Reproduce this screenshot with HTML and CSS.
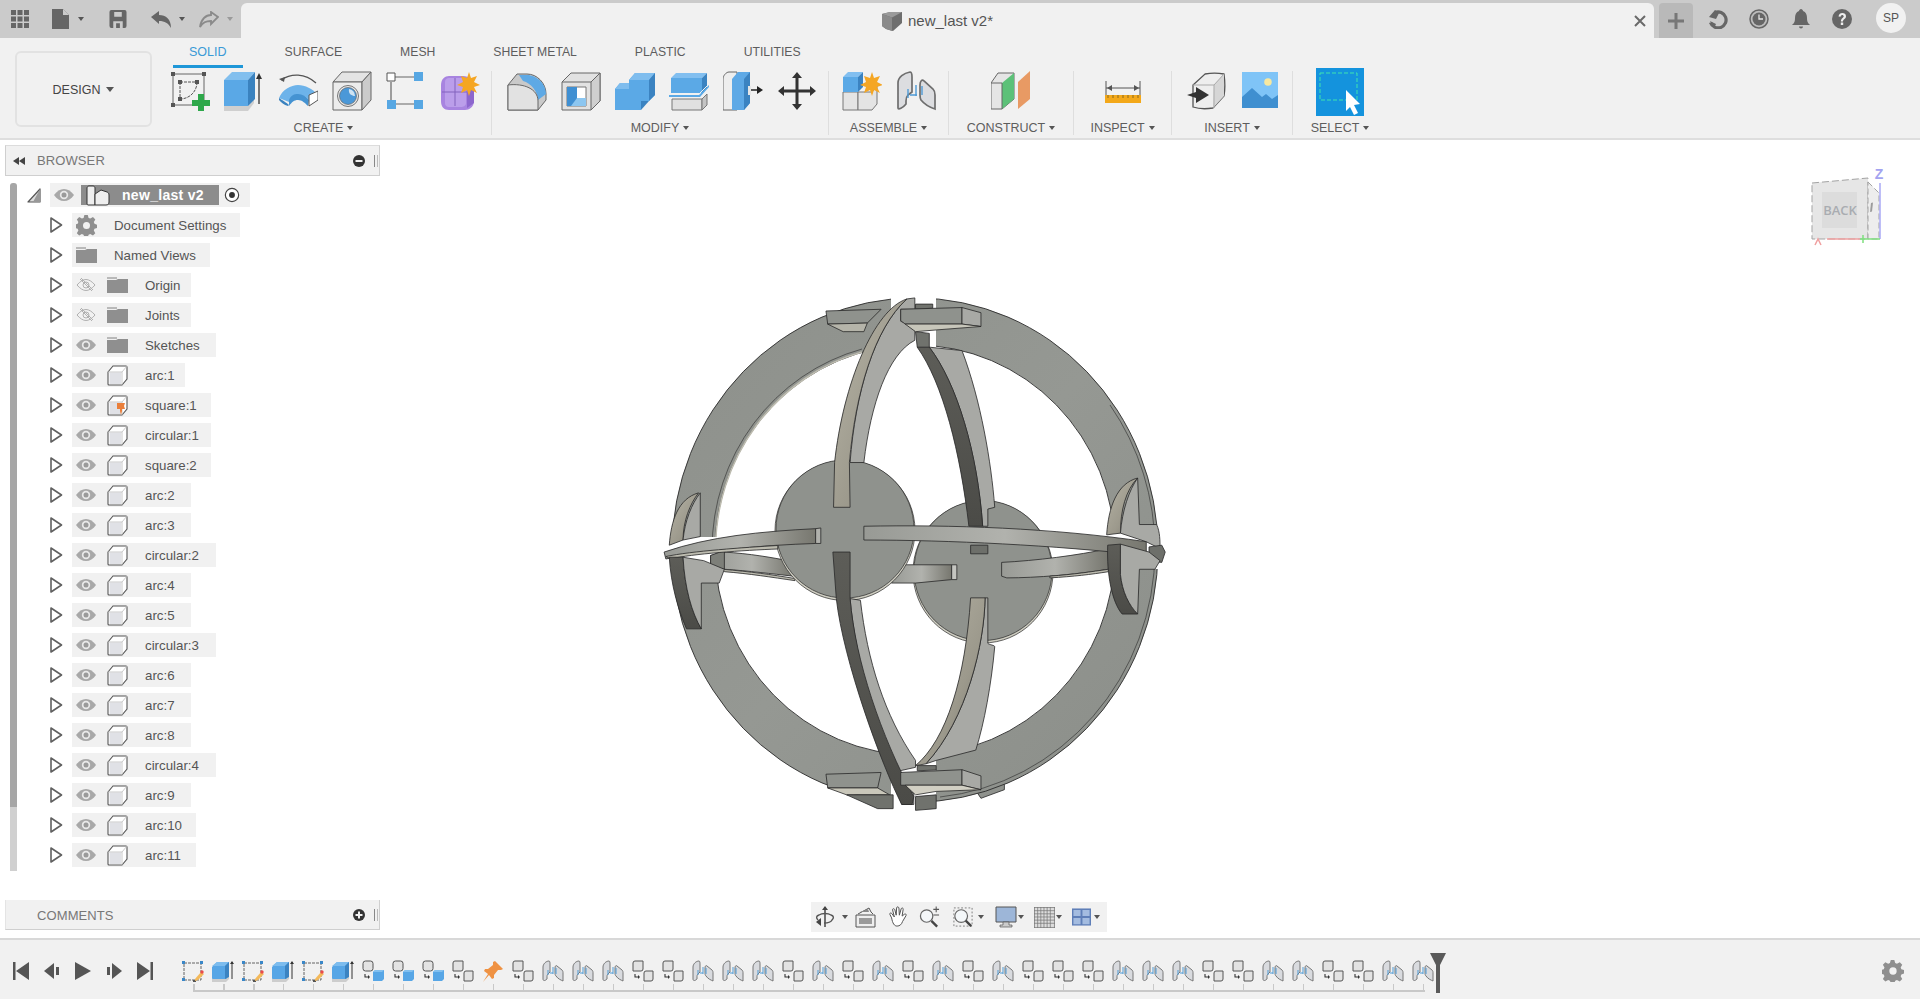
FILE: index.html
```html
<!DOCTYPE html>
<html lang="en">
<head>
<meta charset="utf-8">
<title>new_last v2</title>
<link rel="stylesheet" href="styles.css">
</head>
<body>
<svg class="defs" width="0" height="0">
  <defs>
    <linearGradient id="gt" x1="0" y1="0" x2="1" y2="1"><stop offset="0" stop-color="#b7b4a6"/><stop offset=".6" stop-color="#9c998c"/><stop offset="1" stop-color="#75746b"/></linearGradient>
    <linearGradient id="gd" x1="0" y1="0" x2="0" y2="1"><stop offset="0" stop-color="#5d5d58"/><stop offset="1" stop-color="#4b4b47"/></linearGradient>
    <linearGradient id="gb" x1="0" y1="0" x2="1" y2="0"><stop offset="0" stop-color="#989a95"/><stop offset=".5" stop-color="#b1b2ad"/><stop offset="1" stop-color="#77776f"/></linearGradient>
    <linearGradient id="gr" x1="0" y1="0" x2="1" y2="1"><stop offset="0" stop-color="#8d908b"/><stop offset=".5" stop-color="#959893"/><stop offset="1" stop-color="#8b8e89"/></linearGradient>
    <clipPath id="rc"><path d="M0 0H251V257H0zM296 0H540V245H296zM0 303H251V540H0zM296 289H540V540H296z"/></clipPath>
    <symbol id="i-sketch" viewBox="0 0 40 40"><path d="M3 3h31v31H3z" fill="none" stroke="#666" stroke-width="1"/><path d="M10 11h17M27 11c0 10-8 17-17 17M10 11v17" fill="none" stroke="#555" stroke-width="1" stroke-dasharray="3 1"/><path d="M1 1h4v4H1zM32 1h4v4h-4zM1 32h4v4H1zM8 9h4v4H8zM25 9h4v4h-4zM8 26h4v4H8z" fill="#555"/><path d="M28 23h6v6h6v6h-6v5h-6v-5h-6v-6h6z" fill="#2ea84b"/></symbol>
    <symbol id="i-extrude" viewBox="0 0 40 40"><path d="M0 35h24l6-7v4l-6 8H0z" fill="#cfcfcf"/><path d="M0 9h24v26H0z" fill="#5aa8e6"/><path d="M0 9l8-8h23l-7 8z" fill="#82bfee"/><path d="M24 9l7-8v27l-7 7z" fill="#3a82bf"/><path d="M35 33V5" stroke="#333" stroke-width="1.3"/><path d="M32 8l3-6 3 6z" fill="#333"/></symbol>
    <symbol id="i-revolve" viewBox="0 0 40 40"><path d="M3 9c10-7 24-7 35 3" fill="none" stroke="#555" stroke-width="1.3"/><path d="M1 8l6-2-1 5z" fill="#555"/><path d="M1 27c3-8 12-13 19-13s15 4 19 9l-8 6c-3-4-7-5-11-5s-7 2-9 7z" fill="#6db3ea"/><path d="M1 27c3 2 8 5 10 7l-1 1c-4-1-7-4-9-6z" fill="#3a82bf"/><path d="M11 29c2-5 5-6 9-6s8 2 11 6l-1 6c-3-3-6-6-10-6s-6 2-9 6z" fill="#4593d2"/><path d="M31 24l9-4v9l-9 6z" fill="#fff" stroke="#555"/></symbol>
    <symbol id="i-hole" viewBox="0 0 40 40"><path d="M1 11L10 1h29L30 11z" fill="#e4e4e4" stroke="#666"/><path d="M1 11h29v28H1z" fill="#ececec" stroke="#666"/><path d="M30 11l9-10v28l-9 10z" fill="#cbcbcb" stroke="#666"/><circle cx="16" cy="25" r="10.5" fill="#e8e8e8" stroke="#777"/><circle cx="16" cy="25" r="8.500" fill="#4b98d8" stroke="#666" stroke-width=".7"/><path d="M17 18a7 7 0 0 1 6 7c-3 0-7-2-6-7z" fill="#cfe3f3"/></symbol>
    <symbol id="i-pattern" viewBox="0 0 40 40"><path d="M9 6h22M5 11v22M9 33h22" stroke="#666" stroke-width="1.2"/><path d="M1 2h8v8H1z" fill="#fff" stroke="#555"/><path d="M28 1h9v9h-9zM1 29h9v9H1zM28 29h9v9h-9z" fill="#57a7e3"/></symbol>
    <symbol id="i-form" viewBox="0 0 40 40"><path d="M1 14c0-6 4-9 8-9h14c6 0 11 5 11 10v15c0 6-5 9-9 9H9c-5 0-8-3-8-9z" fill="#a884e0"/><path d="M5 11c0-3 2-4 4-4h14l3 3v22c0 3-3 4-5 4H9c-3 0-4-2-4-4z" fill="#bb9eea"/><path d="M2 21h25M15 7v28" stroke="#8263bd" stroke-width="1"/><path d="M27 12l7 2v18l-7 5z" fill="#8c66cd"/><path d="M29 1l2 6 6-2-3 6 6 3-6 2 3 6-6-3-2 6-2-6-6 3 2-6-6-2 6-3-2-6 6 2z" fill="#f5a623"/></symbol>
    <symbol id="i-fillet" viewBox="0 0 40 40"><path d="M1 39V14L10 3h10c10 0 19 9 19 20v6l-8 10z" fill="#c9c9c9" stroke="#666"/><path d="M12 4h8c10 0 19 9 19 19l-8 6C31 21 24 12 16 10z" fill="#5ea9e5"/><path d="M1 14c16-2 30 4 30 16v9H1z" fill="#e2e2e2" stroke="#666"/></symbol>
    <symbol id="i-shell" viewBox="0 0 40 40"><path d="M1 39V11L10 2h29v28l-9 9z" fill="#e2e2e2" stroke="#666"/><path d="M30 11l9-9v28l-9 9z" fill="#cfcfcf" stroke="#666"/><path d="M1 11h29" stroke="#666"/><path d="M6 16h19v19H6z" fill="#fff" stroke="#777"/><path d="M6 16h10v11h9v8H6z" fill="#3f8fd2"/><path d="M16 27h9v8h-15z" fill="#8cc6f0"/></symbol>
    <symbol id="i-combine" viewBox="0 0 40 40"><path d="M14 9l6-7h20v22l-6 6H14z" fill="#5ba9e6"/><path d="M14 9l6-7h20l-6 7z" fill="#7fbdee"/><path d="M34 9l6-7v22l-6 6z" fill="#3b83c1"/><path d="M0 18l5-6h21v27H0z" fill="#5ba9e6"/><path d="M0 18l5-6h9v6z" fill="#7fbdee"/><path d="M26 30h8l-8 9z" fill="#3b83c1"/></symbol>
    <symbol id="i-split" viewBox="0 0 40 40"><path d="M2 7h31v15H2z" fill="#5ba9e6"/><path d="M2 7l5-5h31l-5 5z" fill="#82bff0"/><path d="M33 7l5-5v15l-5 5z" fill="#3b83c1"/><path d="M0 24h30l10-10v2L31 26H0z" fill="#5ba9e6"/><path d="M0 23h30l10-10" fill="none" stroke="#f1f1f1"/><path d="M3 28h30v11H3z" fill="#e0e0e0" stroke="#777"/><path d="M33 28l5-5v11l-5 5z" fill="#c4c4c4" stroke="#777"/></symbol>
    <symbol id="i-press" viewBox="0 0 40 40"><path d="M0 39V8c0-3 3-7 6-7h8v38z" fill="#eee" stroke="#666"/><path d="M9 39V8l6-7h12v31l-6 7z" fill="#5ea9e6"/><path d="M21 39V8l6-7v31z" fill="#3b83c1"/><path d="M27 19h9" stroke="#222" stroke-width="1.5"/><path d="M34 15l6 4-6 4z" fill="#222"/><path d="M25 15v9h3v-9z" fill="#e6e6e6"/></symbol>
    <symbol id="i-move" viewBox="0 0 40 40"><path d="M18.500 7h3v11.500H33V15l6 5-6 5v-3.500H21.500V33H25l-5 6-5-6h3.500V21.500H7V25l-6-5 6-5v3.500h11.500V7H15l5-6 5 6z" fill="#333"/></symbol>
    <symbol id="i-newcomp" viewBox="0 0 40 40"><path d="M1 21h15v18H1z" fill="#e4e4e4" stroke="#777"/><path d="M16 21h14l5-6v18l-5 6H16z" fill="#e4e4e4" stroke="#777"/><path d="M1 6h15v15H1z" fill="#5ba9e6"/><path d="M1 6l5-5h15l-5 5z" fill="#82bff0"/><path d="M16 6l5-5v15l-5 5z" fill="#3b83c1"/><path d="M30 1l2 6 6-2-3 6 6 3-6 2 3 6-6-3-2 6-2-6-6 3 2-6-6-2 6-3-2-6 6 2z" fill="#f5a623"/></symbol>
    <symbol id="i-joint" viewBox="0 0 40 40"><path d="M2 37V12C2 6 8 2 14 1c2 0 2 3 2 5v15l-4 3c-2 2-2 4-2 6v3c-3 4-8 6-8 4z" fill="#dcdde0" stroke="#6e6e6e" stroke-width="1.700"/><path d="M24 14c0-4 2-6 4-4l9 8c2 2 2 3 2 6v14c-3-1-10-4-14-9-1-2-1-3-1-5z" fill="#dcdde0" stroke="#6e6e6e" stroke-width="1.700"/><path d="M12 18v9M20 14v11M21 24h-7M26 15v9" stroke="#4f9bd6" stroke-width="1.400" fill="none"/></symbol>
    <symbol id="i-construct" viewBox="0 0 40 40"><path d="M0 38V12L7 2h16v26l-12 10z" fill="#e5e5e5" stroke="#666"/><path d="M11 38V12l12-10v26z" fill="#5cc178"/><path d="M27 38l12-10V0L27 11z" fill="#e89a64"/><path d="M0 12h11v26" fill="none" stroke="#666"/></symbol>
    <symbol id="i-inspect" viewBox="0 0 40 40"><path d="M3 10v14M37 10v14" stroke="#555" stroke-width="1"/><path d="M3 17h34" stroke="#555" stroke-width="1"/><path d="M4 17l5-3v6zM36 17l-5-3v6z" fill="#555"/><path d="M2 24h36v8H2z" fill="#f3a81a"/><path d="M5 24v3M10 24v3M15 24v3M20 24v3M25 24v3M30 24v3M35 24v3" stroke="#8b6a1c"/></symbol>
    <symbol id="i-insert" viewBox="0 0 40 40"><path d="M6 36V14L18 3c6-1 13-1 19 0 1 7 1 16 0 22L26 37c-6 1-14 1-20-1z" fill="#eee" stroke="#555" stroke-width="1.300"/><path d="M27 14l10-11v22L26 37z" fill="#d6d6d6"/><path d="M6 14h21M37 3L27 14v23" fill="none" stroke="#aaa"/><path d="M0 24l9-3v-5l13 8-13 8v-5z" fill="#333"/></symbol>
    <symbol id="i-image" viewBox="0 0 40 40"><path d="M1 1h36v36H1z" fill="#7fc4f7"/><circle cx="27" cy="11" r="3.800" fill="#f7e8a0"/><path d="M1 26l10-9 10 9 4-3 6 5 6-4v13H1z" fill="#3f8fd0"/></symbol>
    <symbol id="i-select" viewBox="0 0 48 48"><path d="M0 0h48v48H0z" fill="#1493dd"/><path d="M4 5h37v27H4z" fill="none" stroke="#3fe4b0" stroke-dasharray="4 2"/><path d="M30 22l14 14-6 1 4 8-4 2-4-8-4 4z" fill="#fff"/></symbol>
    <symbol id="i-eye" viewBox="0 0 20 14"><path d="M0 7c3-4 6-6 10-6s7 2 10 6c-3 4-6 6-10 6S3 11 0 7z" fill="#a8a8a8"/><circle cx="10" cy="7" r="4.200" fill="#e9e9e9"/><circle cx="10" cy="7" r="2.500" fill="#9a9a9a"/></symbol>
    <symbol id="i-eyeoff" viewBox="0 0 20 14"><path d="M1 7c3-3.500 6-5.500 9-5.500s6 2 9 5.500c-3 3.500-6 5.500-9 5.500S4 10.500 1 7z" fill="none" stroke="#b0b0b0"/><circle cx="10" cy="7" r="3" fill="none" stroke="#b0b0b0"/><path d="M4 1l12 12M5 0l12 12" stroke="#b0b0b0"/></symbol>
    <symbol id="i-cube" viewBox="0 0 21 21"><path d="M1 7l5-6h13c.5 0 1 .5 1 1v12l-5 6H2c-.5 0-1-.5-1-1z" fill="#fff" stroke="#555" stroke-width="1.100"/><path d="M2.500 7.500h11.500v11.500H2.500z" fill="#e0e1e6"/><path d="M1 7h14v13M15 7l5-6" fill="none" stroke="#bbb" stroke-width=".8"/></symbol>
    <symbol id="i-cubepin" viewBox="0 0 21 21"><use href="#i-cube" width="21" height="21"/><path d="M10 8h8l-1 3 1 3h-3v2l-1 4-1-4v-2h-3z" fill="#ea7f3b"/></symbol>
    <symbol id="i-folder" viewBox="0 0 21 16"><path d="M0 0h10v2H0z" fill="#b9b9b9"/><path d="M0 3h9l2-1h10v14H0z" fill="#8f8f8f"/></symbol>
    <symbol id="i-gear" viewBox="0 0 24 24"><path d="M10 1h4l1 3.500 2 .8 3.200-1.800 2.800 2.800-1.800 3.200.8 2 3 1v4l-3 1-.8 2 1.800 3.200-2.800 2.800-3.200-1.800-2 .8-1 3h-4l-1-3-2-.8-3.200 1.800-2.800-2.800 1.800-3.200-.8-2-3-1v-4l3-1 .8-2-1.800-3.200 2.800-2.800L7 5.300l2-.8z" transform="translate(0 -1) scale(.96)" fill="#8f8f8f"/><circle cx="12" cy="12" r="4" fill="#f1f1f1"/></symbol>
    <symbol id="i-tri" viewBox="0 0 13 16"><path d="M1 1l10.500 7L1 15z" fill="#fff" stroke="#606060" stroke-width="1.600" stroke-linejoin="round"/></symbol>
    <symbol id="t-sk" viewBox="0 0 22 22"><path d="M2 3h17v17H2z" fill="none" stroke="#555" stroke-width=".9" stroke-dasharray="3 1"/><path d="M0 1h3v3H0zM18 1h3v3h-3zM0 18h3v3H0z" fill="#3a87c8"/><path d="M11 20h3v2h-3z" fill="#555"/><path d="M13 19l6-7 3 2-6 6-3 1z" fill="#f3b95a"/><circle cx="20" cy="12" r="1.700" fill="#ea4b4b"/></symbol>
    <symbol id="t-ex" viewBox="0 0 22 22"><path d="M0 18h15l2-2v3l-3 3H0z" fill="#cdcdcd"/><path d="M0 7l5-5h12v14l-3 3H1a1 1 0 0 1-1-1z" fill="#57a6e6"/><path d="M0 6l5-4h12l-4 4z" fill="#7cbcee"/><path d="M13 6l4-4v15l-4 2z" fill="#3b83c1"/><path d="M20 19V2" stroke="#333"/><path d="M18 4l2-3 2 3z" fill="#333"/></symbol>
    <symbol id="t-cb" viewBox="0 0 22 22"><rect x="1" y="1" width="10" height="10" rx="2.500" fill="#e3e3e3" stroke="#555"/><path d="M3 14v3h4" fill="none" stroke="#333" stroke-width="1.100"/><path d="M6 15l2 2-2 2z" fill="#333"/><path d="M11 12l2-2h9v9l-2 2h-9z" fill="#57a6e6"/><path d="M11 12l2-2h9l-2 2z" fill="#83c0ef"/></symbol>
    <symbol id="t-cg" viewBox="0 0 22 22"><path d="M1 3a2 2 0 0 1 2-2h8v8a2 2 0 0 1-2 2H1z" fill="#e3e3e3" stroke="#555"/><path d="M3 14v3h4" fill="none" stroke="#333" stroke-width="1.100"/><path d="M6 15l2 2-2 2z" fill="#333"/><path d="M12 13a2 2 0 0 1 2-2h7v8a2 2 0 0 1-2 2h-7z" fill="#e3e3e3" stroke="#555"/></symbol>
    <symbol id="t-pin" viewBox="0 0 22 22"><path d="M13 1l8 8-2 1-3 0-4 5 0 3-2 1-3-4-6 7 5-8-4-3 1-2 3 0 5-4 0-3z" fill="#ef9243"/></symbol>
    <symbol id="t-jt" viewBox="0 0 22 22"><path d="M1 19V7c0-3 3-6 6-6 1 0 1 2 1 3v8l-2 2c-1 1-1 2-1 3v2c-2 2-4 2-4 0z" fill="#d9dbdf" stroke="#777" stroke-width="1"/><path d="M13 8c0-2 1-3 2-2l5 4c1 1 1 2 1 3v8c-2-1-5-2-7-5-1-1-1-2-1-3z" fill="#d9dbdf" stroke="#777" stroke-width="1"/><path d="M6 10v5M11 7v7M11 13H8M14 8v6" stroke="#4e9ad4" stroke-width="1" fill="none"/></symbol>
    <symbol id="t-ctl" viewBox="0 0 16 18"><path d="M0 0h2.500v18H0zM16 0v18L3 9z" fill="#555"/></symbol>
    <symbol id="t-prev" viewBox="0 0 16 18"><path d="M0 9l10-8v16zM12 5h3v8h-3z" fill="#555"/></symbol>
    <symbol id="t-play" viewBox="0 0 16 18"><path d="M0 0l16 9-16 9z" fill="#555"/></symbol>
  </defs>
</svg>

<header class="topbar">
  <div class="qat">
    <svg class="qi grid" viewBox="0 0 18 18"><path d="M0 0h5v5H0zM6.500 0h5v5h-5zM13 0h5v5h-5zM0 6.500h5v5H0zM6.500 6.500h5v5h-5zM13 6.500h5v5h-5zM0 13h5v5H0zM6.500 13h5v5h-5zM13 13h5v5h-5z" fill="#666"/></svg>
    <svg class="qi file" viewBox="0 0 17 20"><path d="M0 0h11l6 6v14H0z" fill="#666"/><path d="M11 0v6h6" fill="#cbcbcb"/></svg><i class="caret dark mid"></i>
    <svg class="qi save" viewBox="0 0 18 19"><path d="M0 2a2 2 0 0 1 2-2h14a2 2 0 0 1 2 2v15a2 2 0 0 1-2 2H2a2 2 0 0 1-2-2z" fill="#666"/><path d="M5 2h8v5H5zM4 12h10v7H4z" fill="#cbcbcb"/><path d="M7 14h4v5H7z" fill="#666"/></svg>
    <svg class="qi undo" viewBox="0 0 20 17"><path d="M0 6l8-6v4c7 0 12 4 12 13-3-5-6-7-12-7v3z" fill="#666"/></svg><i class="caret dark"></i>
    <svg class="qi redo" viewBox="0 0 20 17"><path d="M19 6l-7-5v3C7 4 2 8 1 16c3-5 6-6 11-6v3z" fill="none" stroke="#8a8a8a" stroke-width="1.800"/></svg><i class="caret faint"></i>
  </div>
  <div class="doctab">
    <div class="doctitle">
      <svg class="docicon" viewBox="0 0 20 20"><path d="M0 3l8-2h12v11l-9 8-7-2-4-3z" fill="#6e6e6e"/><path d="M0 3l10 3.500L20 1H8z" fill="#9a9a9a"/><path d="M0 3l10 3.500V20L4 18l-4-3z" fill="#8a8a8a"/></svg>
      <span>new_last v2*</span>
    </div>
    <svg class="closex" viewBox="0 0 12 12"><path d="M1 1l10 10M11 1L1 11" stroke="#6a6a6a" stroke-width="2"/></svg>
  </div>
  <div class="plusbtn"><svg viewBox="0 0 18 18"><path d="M7.500 1h3v6.500H17v3h-6.500V17h-3v-6.500H1v-3h6.500z" fill="#777"/></svg></div>
  <div class="sysicons">
    <div class="sys"><svg viewBox="0 0 20 20"><path d="M7 3.500a8 8 0 1 1-4.500 10" fill="none" stroke="#666" stroke-width="3.200"/><path d="M1 8l6-7 4 3-3 6zM2 12l6 3-2 4z" fill="#666"/></svg></div>
    <div class="sys"><svg viewBox="0 0 20 20"><circle cx="10" cy="10" r="9" fill="#bdbdbd" stroke="#666" stroke-width="1.500"/><circle cx="10" cy="10" r="6.500" fill="#666"/><path d="M10 5.500V10h4" fill="none" stroke="#e4e4e4" stroke-width="1.300"/></svg></div>
    <div class="sys"><svg viewBox="0 0 20 20"><path d="M10 0c1 0 2 1 2 2 3 1 4 4 4 7 0 4 1 5 3 7H1c2-2 3-3 3-7 0-3 1-6 4-7 0-1 1-2 2-2z" fill="#666"/><path d="M8 17.500h4c0 1-1 2-2 2s-2-1-2-2z" fill="#666"/></svg></div>
    <div class="sys"><svg viewBox="0 0 20 20"><circle cx="10" cy="10" r="10" fill="#666"/><path d="M6.500 7.500C6.800 5 8.500 4 10.300 4c2 0 3.700 1.200 3.700 3.200 0 2.800-3 2.800-3 5.200H8.900c0-3.600 2.800-3.600 2.800-5 0-.9-.6-1.500-1.500-1.500S8.700 6.600 8.600 7.700zM8.800 13.600h2.400V16H8.800z" fill="#eee"/></svg></div>
  </div>
  <div class="avatar">SP</div>
</header>

<section class="toolbar">
  <button class="design">DESIGN<i class="caret dark big"></i></button>
  <div class="ribbon">
    <nav class="tabs">
      <a class="tab active">SOLID</a><a class="tab">SURFACE</a><a class="tab">MESH</a><a class="tab">SHEET METAL</a><a class="tab">PLASTIC</a><a class="tab">UTILITIES</a>
    </nav>
    <div class="groups">
      <div class="group g-create"><div class="icons shifted">
        <svg class="ti"><use href="#i-sketch"/></svg><svg class="ti"><use href="#i-extrude"/></svg><svg class="ti"><use href="#i-revolve"/></svg><svg class="ti"><use href="#i-hole"/></svg><svg class="ti"><use href="#i-pattern"/></svg><svg class="ti"><use href="#i-form"/></svg>
      </div><div class="glabel">CREATE<i class="caret"></i></div></div>
      <div class="group g-modify"><div class="icons shifted">
        <svg class="ti"><use href="#i-fillet"/></svg><svg class="ti"><use href="#i-shell"/></svg><svg class="ti"><use href="#i-combine"/></svg><svg class="ti"><use href="#i-split"/></svg><svg class="ti"><use href="#i-press"/></svg><svg class="ti"><use href="#i-move"/></svg>
      </div><div class="glabel">MODIFY<i class="caret"></i></div></div>
      <div class="group g-assemble"><div class="icons">
        <svg class="ti"><use href="#i-newcomp"/></svg><svg class="ti"><use href="#i-joint"/></svg>
      </div><div class="glabel">ASSEMBLE<i class="caret"></i></div></div>
      <div class="group g-construct"><div class="icons">
        <svg class="ti"><use href="#i-construct"/></svg>
      </div><div class="glabel">CONSTRUCT<i class="caret"></i></div></div>
      <div class="group g-inspect"><div class="icons">
        <svg class="ti"><use href="#i-inspect"/></svg>
      </div><div class="glabel">INSPECT<i class="caret"></i></div></div>
      <div class="group g-insert"><div class="icons shifted">
        <svg class="ti"><use href="#i-insert"/></svg><svg class="ti"><use href="#i-image"/></svg>
      </div><div class="glabel">INSERT<i class="caret"></i></div></div>
      <div class="group g-select"><div class="icons">
        <svg class="ti sel"><use href="#i-select"/></svg>
      </div><div class="glabel">SELECT<i class="caret"></i></div></div>
    </div>
  </div>
</section>

<main class="stage">
  <aside class="leftcol">
    <div class="phead">
      <svg class="rew" viewBox="0 0 12 8"><path d="M6 0v8L0 4zM12 0v8L6 4z" fill="#444"/></svg>
      <span class="ptitle">BROWSER</span>
      <svg class="pbtn" viewBox="0 0 12 12"><circle cx="6" cy="6" r="6" fill="#333"/><path d="M2.500 5h7v2h-7z" fill="#f1f1f1"/></svg>
      <span class="pipes"></span>
    </div>
    <div class="treewrap">
      <div class="sbar"></div>
      <div class="tree">
        <div class="row root">
          <svg class="tri opened" viewBox="0 0 14 15"><path d="M13 1v13H1z" fill="#ddd" stroke="#555" stroke-width="1.200" stroke-linejoin="round"/><path d="M13 1v13H6z" fill="#999"/></svg>
          <div class="item rootitem">
            <svg class="eye"><use href="#i-eye"/></svg>
            <div class="rootname"><svg class="rooticon" viewBox="0 0 24 21"><path d="M1 3c0-1 1-2 2-2h4c1 0 2 1 2 2v17H2c-.5 0-1-.5-1-1z" fill="#eee" stroke="#333"/><path d="M9 9l6-4 6 2c1 .5 2 1 2 3v7c0 2-1 3-3 3H9z" fill="#eee" stroke="#333"/></svg><span>new_last v2</span></div>
            <svg class="radio" viewBox="0 0 18 18"><circle cx="9" cy="9" r="7.500" fill="#fff" stroke="#444" stroke-width="1.300"/><circle cx="9" cy="9" r="3.300" fill="#333"/></svg>
          </div>
        </div>
        <div class="row"><svg class="tri"><use href="#i-tri"/></svg><div class="item w240"><svg class="gear"><use href="#i-gear"/></svg><span class="lab short">Document Settings</span></div></div>
        <div class="row"><svg class="tri"><use href="#i-tri"/></svg><div class="item w210"><svg class="folder first"><use href="#i-folder"/></svg><span class="lab short">Named Views</span></div></div>
        <div class="row"><svg class="tri"><use href="#i-tri"/></svg><div class="item w191"><svg class="eye"><use href="#i-eyeoff"/></svg><svg class="folder"><use href="#i-folder"/></svg><span class="lab">Origin</span></div></div>
        <div class="row"><svg class="tri"><use href="#i-tri"/></svg><div class="item w191"><svg class="eye"><use href="#i-eyeoff"/></svg><svg class="folder"><use href="#i-folder"/></svg><span class="lab">Joints</span></div></div>
        <div class="row"><svg class="tri"><use href="#i-tri"/></svg><div class="item w216"><svg class="eye"><use href="#i-eye"/></svg><svg class="folder"><use href="#i-folder"/></svg><span class="lab">Sketches</span></div></div>
        <div class="row"><svg class="tri"><use href="#i-tri"/></svg><div class="item w185"><svg class="eye"><use href="#i-eye"/></svg><svg class="cube"><use href="#i-cube"/></svg><span class="lab">arc:1</span></div></div>
        <div class="row"><svg class="tri"><use href="#i-tri"/></svg><div class="item w211"><svg class="eye"><use href="#i-eye"/></svg><svg class="cube"><use href="#i-cubepin"/></svg><span class="lab">square:1</span></div></div>
        <div class="row"><svg class="tri"><use href="#i-tri"/></svg><div class="item w211"><svg class="eye"><use href="#i-eye"/></svg><svg class="cube"><use href="#i-cube"/></svg><span class="lab">circular:1</span></div></div>
        <div class="row"><svg class="tri"><use href="#i-tri"/></svg><div class="item w211"><svg class="eye"><use href="#i-eye"/></svg><svg class="cube"><use href="#i-cube"/></svg><span class="lab">square:2</span></div></div>
        <div class="row"><svg class="tri"><use href="#i-tri"/></svg><div class="item w191"><svg class="eye"><use href="#i-eye"/></svg><svg class="cube"><use href="#i-cube"/></svg><span class="lab">arc:2</span></div></div>
        <div class="row"><svg class="tri"><use href="#i-tri"/></svg><div class="item w191"><svg class="eye"><use href="#i-eye"/></svg><svg class="cube"><use href="#i-cube"/></svg><span class="lab">arc:3</span></div></div>
        <div class="row"><svg class="tri"><use href="#i-tri"/></svg><div class="item w216"><svg class="eye"><use href="#i-eye"/></svg><svg class="cube"><use href="#i-cube"/></svg><span class="lab">circular:2</span></div></div>
        <div class="row"><svg class="tri"><use href="#i-tri"/></svg><div class="item w191"><svg class="eye"><use href="#i-eye"/></svg><svg class="cube"><use href="#i-cube"/></svg><span class="lab">arc:4</span></div></div>
        <div class="row"><svg class="tri"><use href="#i-tri"/></svg><div class="item w191"><svg class="eye"><use href="#i-eye"/></svg><svg class="cube"><use href="#i-cube"/></svg><span class="lab">arc:5</span></div></div>
        <div class="row"><svg class="tri"><use href="#i-tri"/></svg><div class="item w216"><svg class="eye"><use href="#i-eye"/></svg><svg class="cube"><use href="#i-cube"/></svg><span class="lab">circular:3</span></div></div>
        <div class="row"><svg class="tri"><use href="#i-tri"/></svg><div class="item w191"><svg class="eye"><use href="#i-eye"/></svg><svg class="cube"><use href="#i-cube"/></svg><span class="lab">arc:6</span></div></div>
        <div class="row"><svg class="tri"><use href="#i-tri"/></svg><div class="item w191"><svg class="eye"><use href="#i-eye"/></svg><svg class="cube"><use href="#i-cube"/></svg><span class="lab">arc:7</span></div></div>
        <div class="row"><svg class="tri"><use href="#i-tri"/></svg><div class="item w191"><svg class="eye"><use href="#i-eye"/></svg><svg class="cube"><use href="#i-cube"/></svg><span class="lab">arc:8</span></div></div>
        <div class="row"><svg class="tri"><use href="#i-tri"/></svg><div class="item w216"><svg class="eye"><use href="#i-eye"/></svg><svg class="cube"><use href="#i-cube"/></svg><span class="lab">circular:4</span></div></div>
        <div class="row"><svg class="tri"><use href="#i-tri"/></svg><div class="item w191"><svg class="eye"><use href="#i-eye"/></svg><svg class="cube"><use href="#i-cube"/></svg><span class="lab">arc:9</span></div></div>
        <div class="row"><svg class="tri"><use href="#i-tri"/></svg><div class="item w196"><svg class="eye"><use href="#i-eye"/></svg><svg class="cube"><use href="#i-cube"/></svg><span class="lab">arc:10</span></div></div>
        <div class="row"><svg class="tri"><use href="#i-tri"/></svg><div class="item w196"><svg class="eye"><use href="#i-eye"/></svg><svg class="cube"><use href="#i-cube"/></svg><span class="lab">arc:11</span></div></div>
      </div>
    </div>
    <div class="phead comments">
      <span class="ptitle">COMMENTS</span>
      <svg class="pbtn" viewBox="0 0 12 12"><circle cx="6" cy="6" r="6" fill="#333"/><path d="M5 2.500h2V5h2.500v2H7v2.500H5V7H2.500V5H5z" fill="#f1f1f1"/></svg>
      <span class="pipes"></span>
    </div>
  </aside>

  <svg class="model" viewBox="0 0 540 540" width="540" height="540">
    <g class="m" stroke="#2a2a2a" stroke-width="2.400" stroke-linejoin="round">
      <g transform="translate(0,260) scale(.3444)">
        <path fill="#8f928d" d="M980,735 L1058,705 L1058,725 L990,750Z"/>
      </g>
      <g clip-path="url(#rc)">
        <path fill="url(#gr)" fill-rule="evenodd" stroke-width=".9" d="M32,270 A243,252 0 1 1 518,270 A243,252 0 1 1 32,270Z M75,270 A200,205 0 1 0 475,270 A200,205 0 1 0 75,270Z"/>
        <path fill="none" stroke="#bdbcb0" stroke-width="1.600" d="M75.500,270 A199,205 0 0 1 222,72"/>
        <path fill="none" stroke-width=".6" d="M72,270 A203,208 0 0 1 222,69"/>
        <path fill="none" stroke-width=".6" d="M515,270 A240,249 0 0 0 470,125"/>
        <path fill="none" stroke-width=".6" d="M515,270 A240,249 0 0 1 300,517"/>
      </g>
      <g transform="translate(0,260) scale(.3444)">
        <path fill="url(#gb)" d="M245,35 C320,40 380,50 440,62 L445,105 C380,98 320,90 245,85 L205,70 L205,45Z"/>
        <path fill="#7d7f79" d="M205,45 L245,30 L245,85 L205,75Z"/>
        <path fill="#bdbcb0" d="M240,85 C320,92 380,100 450,112 L450,118 C380,108 320,98 245,92Z"/>
      </g>
      <ellipse cx="343" cy="292" rx="70" ry="71" fill="#cfcec2" stroke-width=".7"/>
      <ellipse cx="343" cy="290.500" rx="69" ry="70" fill="#8f928d" stroke-width=".7"/>
      <g transform="translate(0,260) scale(.3444)">
        <path fill="url(#gb)" d="M730,125 L800,125 L905,115 L905,72 L760,72Z"/>
        <path fill="#c4c5c0" d="M905,72 L920,72 L920,115 L905,115Z"/>
        <path fill="url(#gb)" d="M1050,65 C1150,60 1270,45 1360,25 L1360,85 C1270,100 1150,110 1065,110 L1050,105Z"/>
        <path fill="#bdbcb0" d="M1190,105 C1260,100 1310,92 1360,85 L1360,92 C1310,100 1260,106 1190,110Z"/>
      </g>
      <ellipse cx="205" cy="250.500" rx="70" ry="70" fill="#cfcec2" stroke-width=".7"/>
      <ellipse cx="205" cy="249" rx="69" ry="69" fill="#8f928d" stroke-width=".7"/>
      <g transform="scale(.3444)">
        <path fill="#70726d" d="M800,70 L850,70 L850,82 L800,84Z"/>
        <path fill="#a8a9a5" d="M840,195 L935,205 C990,350 1020,530 1030,660 L1010,665 L1010,715 L995,715 C980,500 920,300 840,195Z"/>
        <path fill="url(#gd)" d="M805,195 L840,195 C920,300 980,500 995,715 L955,715 C930,500 880,300 805,195Z"/>
        <path fill="#70726d" d="M800,150 L840,155 L840,195 L805,195Z"/>
        <path fill="#8f928d" d="M540,90 L700,85 L660,125 L545,128Z"/>
        <path fill="#b5b4a9" d="M545,128 L660,125 L650,150 L590,150Z"/>
        <path fill="#a8a9a5" d="M798,52 L798,85 L757,85 L757,120 L798,135 L798,175 C720,215 670,360 650,530 L610,530 C625,330 680,140 775,55Z"/>
        <path fill="url(#gt)" d="M775,55 C680,85 590,300 565,530 L562,660 L610,660 L608,530 C625,330 680,140 775,55Z"/>
        <path fill="#8f928d" d="M757,85 L935,80 L935,128 L770,128 L757,118Z"/>
        <path fill="#a8a9a5" d="M935,80 L990,95 L990,135 L935,128Z"/>
        <path fill="#c7c6ba" d="M770,128 L935,128 L990,135 L860,145 L800,150Z"/>
        <path fill="#6d6f6a" d="M960,770 L1010,770 L1010,795 L960,795Z"/>
        <path fill="url(#gt)" d="M85,770 C90,700 110,635 170,618 C145,650 125,700 125,755Z"/>
        <path fill="#a8a9a5" d="M125,755 C130,700 150,650 175,618 L175,745Z"/>
        <path fill="url(#gt)" d="M1355,740 C1360,660 1385,590 1445,575 C1410,610 1395,670 1395,735Z"/>
        <path fill="#a8a9a5" d="M1395,735 C1400,670 1420,610 1445,575 L1450,710 L1500,710 C1510,730 1510,760 1510,780 L1470,760Z"/>
        <path fill="url(#gb)" d="M70,790 C200,745 350,730 510,722 L510,765 C350,770 200,785 75,810Z"/>
        <path fill="#b0b1ac" d="M510,722 L525,720 L525,765 L510,765Z"/>
        <path fill="url(#gb)" d="M650,715 C900,710 1200,720 1470,760 L1470,800 C1200,770 900,755 650,755Z"/>
        <path fill="#6d6f6a" d="M1478,775 L1515,770 L1525,790 L1515,820 L1478,815Z"/>
      </g>
      <g transform="translate(0,260) scale(.3444)">
        <path fill="#bdbcb0" d="M75,48 C150,32 300,22 400,16 L400,26 C300,30 150,40 90,55Z"/>
        <path fill="url(#gd)" d="M85,50 L125,50 C130,140 150,210 178,258 L135,258 C110,200 90,130 85,50Z"/>
        <path fill="#a8a9a5" d="M125,50 L185,60 L245,85 L230,125 L178,125 L178,258 C150,210 130,140 125,50Z"/>
        <path fill="url(#gd)" d="M1358,15 L1395,12 L1395,100 C1400,150 1420,190 1445,215 L1400,215 C1370,180 1355,100 1358,15Z"/>
        <path fill="#a8a9a5" d="M1395,12 L1478,35 L1510,60 L1495,85 L1450,85 L1445,215 C1420,190 1400,150 1395,100Z"/>
        <path fill="#a8a9a5" d="M1010,300 C1015,305 1030,305 1030,310 C1020,420 1000,530 975,610 L860,640 L830,650 C950,520 1000,300 1002,168 L1010,168Z"/>
        <path fill="url(#gt)" d="M960,168 L1002,168 C1000,300 950,520 830,650 L800,655 C890,580 945,400 960,168Z"/>
        <path fill="#a8a9a5" d="M610,170 L640,175 C660,350 710,510 800,640 L800,660 L755,670 L755,715 L795,735 L795,768 L760,768 C700,600 625,350 610,170Z"/>
        <path fill="url(#gd)" d="M560,35 L610,35 L610,170 C625,350 700,570 795,745 L790,768 L760,768 C700,650 590,350 570,170Z"/>
        <path fill="#8f928d" d="M540,680 L700,675 L690,720 L545,720Z"/>
        <path fill="#c9c7ba" d="M545,720 L690,720 L725,740 L600,740Z"/>
        <path fill="#70726d" d="M600,740 L735,740 L735,780 L690,780Z"/>
        <path fill="#70726d" d="M800,745 L860,740 L860,780 L800,785Z"/>
        <path fill="#8f928d" d="M757,675 L935,667 L935,712 L757,712Z"/>
        <path fill="#a8a9a5" d="M935,667 L990,685 L990,725 L935,712Z"/>
        <path fill="#d1cfc3" d="M770,712 L935,712 L990,725 L860,730 L800,740Z"/>
        <path fill="#70726d" d="M805,655 L860,655 L860,668 L805,670Z"/>
      </g>
    </g>
  </svg>

  <svg class="viewcube" viewBox="0 0 110 85" width="110" height="85">
    <path d="M22 18L78 13V74H22z" fill="#e6e6e6" stroke="#a3a3a3" stroke-dasharray="7 3"/>
    <path d="M78 17L89 28V74H78z" fill="#ededed" stroke="#a3a3a3" stroke-dasharray="6 3"/>
    <path d="M32 27h35v36H32z" fill="#dcdcdc"/>
    <text x="50" y="50" class="vtext">BACK</text>
    <path d="M81 38l2-.5-1 9-2 .5z" fill="#9c9c9c"/>
    <path d="M90 18V74" stroke="#a9a9f5" stroke-width="1.500"/>
    <text x="89" y="14" class="vz">Z</text>
    <path d="M37 74H70" stroke="#f0a0a0" stroke-width="1.500"/>
    <path d="M70 74H90M73 70v8" stroke="#7fe07f" stroke-width="1.500"/>
    <path d="M25 80l3-6 3 6" fill="none" stroke="#f0a0a0" stroke-width="1.500"/>
  </svg>

  <div class="navbar">
    <svg class="ni orb" viewBox="0 0 20 24"><path d="M10 2v20" stroke="#444" stroke-width="1.500"/><path d="M7 5l3-4 3 4z" fill="#444"/><path d="M3 15c-2-2-2-4 1-5 3-2 9-2 12 0 3 1 3 3 1 5-1 2-5 3-8 3" fill="none" stroke="#555" stroke-width="1.400"/><path d="M1 17l5-4v8z" fill="#444"/></svg><i class="caret dark c7"></i>
    <svg class="ni film" viewBox="0 0 21 22"><path d="M1 9h19v12H1z" fill="#eee" stroke="#555"/><path d="M4 12h13v6H4z" fill="#9a9a9a"/><path d="M3 8l11-6 2 4 2 2" fill="none" stroke="#555"/><path d="M5 6l8-3 1 3z" fill="#8a8a8a"/></svg>
    <svg class="ni hand" viewBox="0 0 22 22"><path d="M4 12L2 8c-.5-1 1-2 2-1l3 4-2-8c0-1.500 2-1.500 2.500 0L9 9l.5-8c0-1.500 2-1.500 2.500 0l.5 8 2-7c.5-1.500 2.500-1 2.200.5L15.500 10l2.500-2c1-1 2.500 0 1.800 1.500L16 16c-1 3-3 5-6 5-3 0-5-3-6-9z" fill="#fff" stroke="#555" stroke-width="1.100"/></svg>
    <svg class="ni zoomi" viewBox="0 0 22 22"><circle cx="8" cy="10" r="6.500" fill="#f4f7f9" stroke="#666" stroke-width="1.300"/><path d="M13 15l6 6" stroke="#444" stroke-width="2.500"/><path d="M15 3h6M18 0v6M15 9h6" stroke="#555" stroke-width="1.100"/></svg>
    <svg class="ni fitb" viewBox="0 0 22 22"><path d="M1 1h20v20H1z" fill="none" stroke="#777" stroke-dasharray="2 2"/><circle cx="9" cy="10" r="7" fill="#f4f7f9" stroke="#666" stroke-width="1.300"/><path d="M14 15l6 6" stroke="#444" stroke-width="2.500"/></svg><i class="caret dark c5"></i>
    <svg class="ni disp" viewBox="0 0 22 22"><path d="M1 1h20v15H1z" fill="#9db6d8" stroke="#555"/><path d="M8 16h6v3h3v2H5v-2h3z" fill="#ccc" stroke="#555" stroke-width=".7"/></svg><i class="caret dark c1"></i>
    <svg class="ni gridi" viewBox="0 0 20 20"><path d="M0 0h20v20H0z" fill="#ddd"/><path d="M.5 0v20M3.500 0v20M6.500 0v20M9.500 0v20M12.500 0v20M15.500 0v20M19.500 0v20M0 .5h20M0 3.500h20M0 6.500h20M0 9.500h20M0 12.500h20M0 15.500h20M0 19.500h20" stroke="#777" stroke-width=".7"/></svg><i class="caret dark c1"></i>
    <svg class="ni vps" viewBox="0 0 20 18"><path d="M0 0h20v18H0z" fill="#5f7fb8"/><path d="M1.500 1.500h7.500v6.500H1.500zM11 1.500h7.500v6.500H11zM1.500 10H9v6.500H1.500zM11 10h7.500v6.500H11z" fill="#a4bce0"/></svg><i class="caret dark c3"></i>
  </div>
</main>

<footer class="timeline">
  <div class="controls">
    <svg class="ctl"><use href="#t-ctl"/></svg>
    <svg class="ctl"><use href="#t-prev"/></svg>
    <svg class="ctl"><use href="#t-play"/></svg>
    <svg class="ctl flip"><use href="#t-prev"/></svg>
    <svg class="ctl flip"><use href="#t-ctl"/></svg>
  </div>
  <div class="track">
    <div class="feats">
      <svg class="ft"><use href="#t-sk"/></svg><svg class="ft"><use href="#t-ex"/></svg><svg class="ft"><use href="#t-sk"/></svg><svg class="ft"><use href="#t-ex"/></svg><svg class="ft"><use href="#t-sk"/></svg><svg class="ft"><use href="#t-ex"/></svg>
      <svg class="ft"><use href="#t-cb"/></svg><svg class="ft"><use href="#t-cb"/></svg><svg class="ft"><use href="#t-cb"/></svg><svg class="ft"><use href="#t-cg"/></svg><svg class="ft"><use href="#t-pin"/></svg>
      <svg class="ft"><use href="#t-cg"/></svg><svg class="ft"><use href="#t-jt"/></svg><svg class="ft"><use href="#t-jt"/></svg><svg class="ft"><use href="#t-jt"/></svg><svg class="ft"><use href="#t-cg"/></svg><svg class="ft"><use href="#t-cg"/></svg>
      <svg class="ft"><use href="#t-jt"/></svg><svg class="ft"><use href="#t-jt"/></svg><svg class="ft"><use href="#t-jt"/></svg><svg class="ft"><use href="#t-cg"/></svg><svg class="ft"><use href="#t-jt"/></svg><svg class="ft"><use href="#t-cg"/></svg>
      <svg class="ft"><use href="#t-jt"/></svg><svg class="ft"><use href="#t-cg"/></svg><svg class="ft"><use href="#t-jt"/></svg><svg class="ft"><use href="#t-cg"/></svg><svg class="ft"><use href="#t-jt"/></svg><svg class="ft"><use href="#t-cg"/></svg>
      <svg class="ft"><use href="#t-cg"/></svg><svg class="ft"><use href="#t-cg"/></svg><svg class="ft"><use href="#t-jt"/></svg><svg class="ft"><use href="#t-jt"/></svg><svg class="ft"><use href="#t-jt"/></svg><svg class="ft"><use href="#t-cg"/></svg>
      <svg class="ft"><use href="#t-cg"/></svg><svg class="ft"><use href="#t-jt"/></svg><svg class="ft"><use href="#t-jt"/></svg><svg class="ft"><use href="#t-cg"/></svg><svg class="ft"><use href="#t-cg"/></svg><svg class="ft"><use href="#t-jt"/></svg><svg class="ft"><use href="#t-jt"/></svg>
    </div>
    <div class="ruler"></div>
    <svg class="playhead" viewBox="0 0 16 40"><path d="M0 0h16l-6 12v28H6V12z" fill="#5a5a5a"/></svg>
  </div>
  <svg class="tlgear"><use href="#i-gear"/></svg>
</footer>
</body>
</html>
```

FILE: styles.css
```css
* { box-sizing: border-box; }
html, body { margin: 0; padding: 0; height: 100%; }
body {
  width: 1920px; height: 999px; overflow: hidden;
  display: flex; flex-direction: column;
  font-family: "Liberation Sans", Arial, sans-serif;
  background: #fff; color: #555;
}
.defs { position: absolute; }
svg { display: block; flex: none; }

.caret { display: inline-block; width: 0; height: 0; border-left: 3.5px solid transparent; border-right: 3.5px solid transparent; border-top: 4px solid #555; margin-left: 4px; vertical-align: 2px; flex: none; }
.caret.big { border-left-width: 4px; border-right-width: 4px; border-top-width: 5px; margin-left: 6px; }
.caret.faint { border-top-color: #9a9a9a; }

/* top bar */
.topbar { height: 38px; background: #cbcbcb; display: flex; align-items: flex-start; flex: none; }
.qat { width: 241px; height: 38px; display: flex; align-items: center; padding-left: 11px; }
.qi { height: 18px; }
.grid { width: 18px; }
.file { width: 17px; height: 20px; margin-left: 23px; }
.qat .caret { margin-left: 8px; }
.qat .mid { margin-left: 9px; }
.save { width: 18px; margin-left: 25px; }
.undo { width: 20px; height: 17px; margin-left: 24px; }
.redo { width: 20px; height: 17px; margin-left: 14px; }
.doctab { width: 1413px; height: 35px; margin-top: 3px; background: #f1f1f1; border-radius: 6px 6px 0 0; display: flex; align-items: center; padding-right: 8px; }
.doctitle { flex: 1; display: flex; align-items: center; justify-content: center; gap: 6px; font-size: 15px; color: #555; }
.docicon { width: 20px; height: 20px; }
.closex { width: 12px; height: 12px; }
.plusbtn { width: 34px; height: 35px; margin: 3px 0 0 5px; background: #b9b9b9; border-radius: 4px 4px 0 0; display: flex; align-items: center; justify-content: center; }
.plusbtn svg { width: 18px; height: 18px; }
.sysicons { display: flex; margin-left: 4px; height: 38px; align-items: center; }
.sys { width: 41.500px; display: flex; justify-content: center; }
.sys svg { width: 20px; height: 20px; }
.avatar { width: 30px; height: 30px; margin: 3px 0 0 13px; border-radius: 50%; background: #f1f1f1; font-size: 12px; display: flex; align-items: center; justify-content: center; color: #555; }

/* toolbar */
.toolbar { height: 102px; background: #f1f1f1; border-bottom: 2px solid #dedede; display: flex; flex: none; padding-left: 15px; }
.design { width: 137px; height: 76px; margin-top: 13px; background: #f1f1f1; border: 2px solid #e2e2e2; border-radius: 6px; font: 12.5px "Liberation Sans", Arial, sans-serif; color: #444; padding: 2px 0 0; }
.ribbon { margin-left: 4px; display: flex; flex-direction: column; }
.tabs { height: 33px; display: flex; padding-left: 4px; font-size: 12.2px; color: #5d5d5d; }
.tab { padding: 7px 29px 0; position: relative; white-space: nowrap; }
.tab.active { color: #3a9ad6; font-size: 12.5px; }
.tab.active::after { content: ""; position: absolute; left: 13px; right: 13px; top: 27px; height: 3px; background: #1f97d8; }
.groups { display: flex; height: 64px; }
.group { display: flex; flex-direction: column; align-items: center; border-right: 1px solid #dedede; }
.g-create { width: 336px; }
.g-modify { width: 337px; }
.g-assemble { width: 120px; }
.g-construct { width: 125px; }
.g-inspect { width: 98px; }
.g-insert { width: 121px; }
.g-select { width: 94px; border-right: 0; }
.icons { display: flex; height: 42px; }
.icons.shifted { margin-left: 3px; }
.ti { width: 40px; height: 40px; margin: 0 7px; overflow: visible; }
.ti.sel { width: 48px; height: 48px; margin-top: -3px; }
.glabel { margin-top: 8px; font-size: 12.5px; line-height: 14px; color: #5d5d5d; white-space: nowrap; }

/* stage */
.stage { flex: 1; position: relative; background: #fff; padding: 5px 0 8px 5px; min-height: 0; }
.leftcol { width: 375px; height: 100%; display: flex; flex-direction: column; }
.phead { height: 31px; flex: none; background: #f1f1f1; border: 1px solid #cfcfcf; border-top-color: #dcdcdc; display: flex; align-items: center; padding: 0 1px 0 7px; }
.phead.comments { padding: 1px 1px 0 31px; height: 30px; border-top: 0; border-left-color: #e4e4e4; }
.rew { width: 12px; height: 8px; margin-right: 12px; }
.ptitle { font-size: 13px; color: #777; flex: 1; letter-spacing: .1px; }
.pbtn { width: 12px; height: 12px; }
.pipes { width: 4px; height: 12px; margin-left: 9px; border-left: 1px solid #888; border-right: 1px solid #bbb; }
.treewrap { flex: 1; display: flex; min-height: 0; padding: 7px 0 0 5px; }
.sbar { width: 7px; height: 688px; border-radius: 3px 3px 0 0; background: linear-gradient(#a6a6a6 0, #a6a6a6 624px, #d0d0d0 624px); flex: none; }
.tree { flex: 1; display: flex; flex-direction: column; gap: 6px; padding-left: 33px; }
.row { height: 24px; display: flex; align-items: center; flex: none; }
.tri { width: 13px; height: 16px; margin-right: 9px; }
.item { height: 24px; background: #f1f1f1; display: flex; align-items: center; padding-left: 4px; font-size: 13.3px; color: #555; }
.eye { width: 20px; height: 14px; }
.cube, .gear { width: 21px; height: 21px; }
.item .cube, .item .folder { margin-left: 11px; }
.folder { width: 21px; height: 16px; }
.item .folder.first { margin-left: 0; }
.lab { margin-left: 17px; white-space: nowrap; }
.w185 { width: 113px; }
.w191 { width: 119px; }
.w196 { width: 124px; }
.w210 { width: 138px; }
.w211 { width: 139px; }
.w216 { width: 144px; }
.w240 { width: 168px; }
.root { margin-left: -23px; }
.tri.opened { width: 14px; height: 15px; margin-right: 9px; }
.rootitem { width: 200px; padding-left: 4px; }
.rootname { width: 138px; height: 20px; margin-left: 7px; background: #8c8c8c; display: flex; align-items: center; padding-left: 5px; color: #fff; font-weight: bold; font-size: 14px; letter-spacing: .3px; }
.rootname span { margin-left: 12px; }
.rooticon { width: 24px; height: 21px; }
.radio { width: 16px; height: 16px; margin-left: 5px; }

/* model, view cube and navigation float over the stage */
.model { position: absolute; left: 640px; top: 140px; overflow: visible; }
.viewcube { position: absolute; left: 1790px; top: 25px; overflow: visible; }
.vtext { font-family: "Open Sans", "Liberation Sans", sans-serif; font-size: 13px; font-weight: 600; fill: #a9acb1; text-anchor: middle; }
.vz { font-family: "Liberation Sans", sans-serif; font-size: 14px; font-weight: bold; fill: #a3a3f0; text-anchor: middle; }
.navbar { position: absolute; left: 811px; top: 762px; width: 296px; height: 30px; background: #f1f1f1; display: flex; align-items: center; padding-left: 4px; }
.ni { height: 22px; }
.orb { width: 20px; height: 24px; }
.c7 { margin-left: 7px; }
.c5 { margin-left: 5px; }
.c3 { margin-left: 3px; }
.c1 { margin-left: 1px; }
.film { width: 21px; margin-left: 7px; }
.hand { width: 20px; margin-left: 12px; }
.zoomi { width: 21px; margin-left: 11px; }
.fitb { width: 20px; height: 20px; margin-left: 13px; }
.disp { width: 22px; margin-left: 11px; }
.gridi { width: 21px; height: 21px; margin-left: 10px; }
.vps { width: 19px; height: 18px; margin-left: 10px; }

/* timeline */
.timeline { height: 61px; flex: none; background: #f1f1f1; border-top: 2px solid #d8d8d8; display: flex; padding: 20px 16px 0 13px; position: relative; }
.controls { display: flex; gap: 15px; height: 18px; width: 165px; margin-top: 2px; }
.ctl { width: 16px; height: 18px; }
.flip { transform: scaleX(-1); }
.track { width: 1260px; position: relative; }
.feats { display: flex; }
.ft { width: 22px; height: 22px; margin: 0 4px; }
.ruler { width: 1232px; height: 8px; margin: 2px 0 0 15px; border-bottom: 2px solid #c8c8c8; background: repeating-linear-gradient(90deg, #c8c8c8 0, #c8c8c8 1.5px, transparent 1.5px, transparent 30px); }
.playhead { position: absolute; left: 1252px; top: -7px; width: 16px; height: 40px; }
.tlgear { width: 22px; height: 22px; margin-left: auto; }
```
